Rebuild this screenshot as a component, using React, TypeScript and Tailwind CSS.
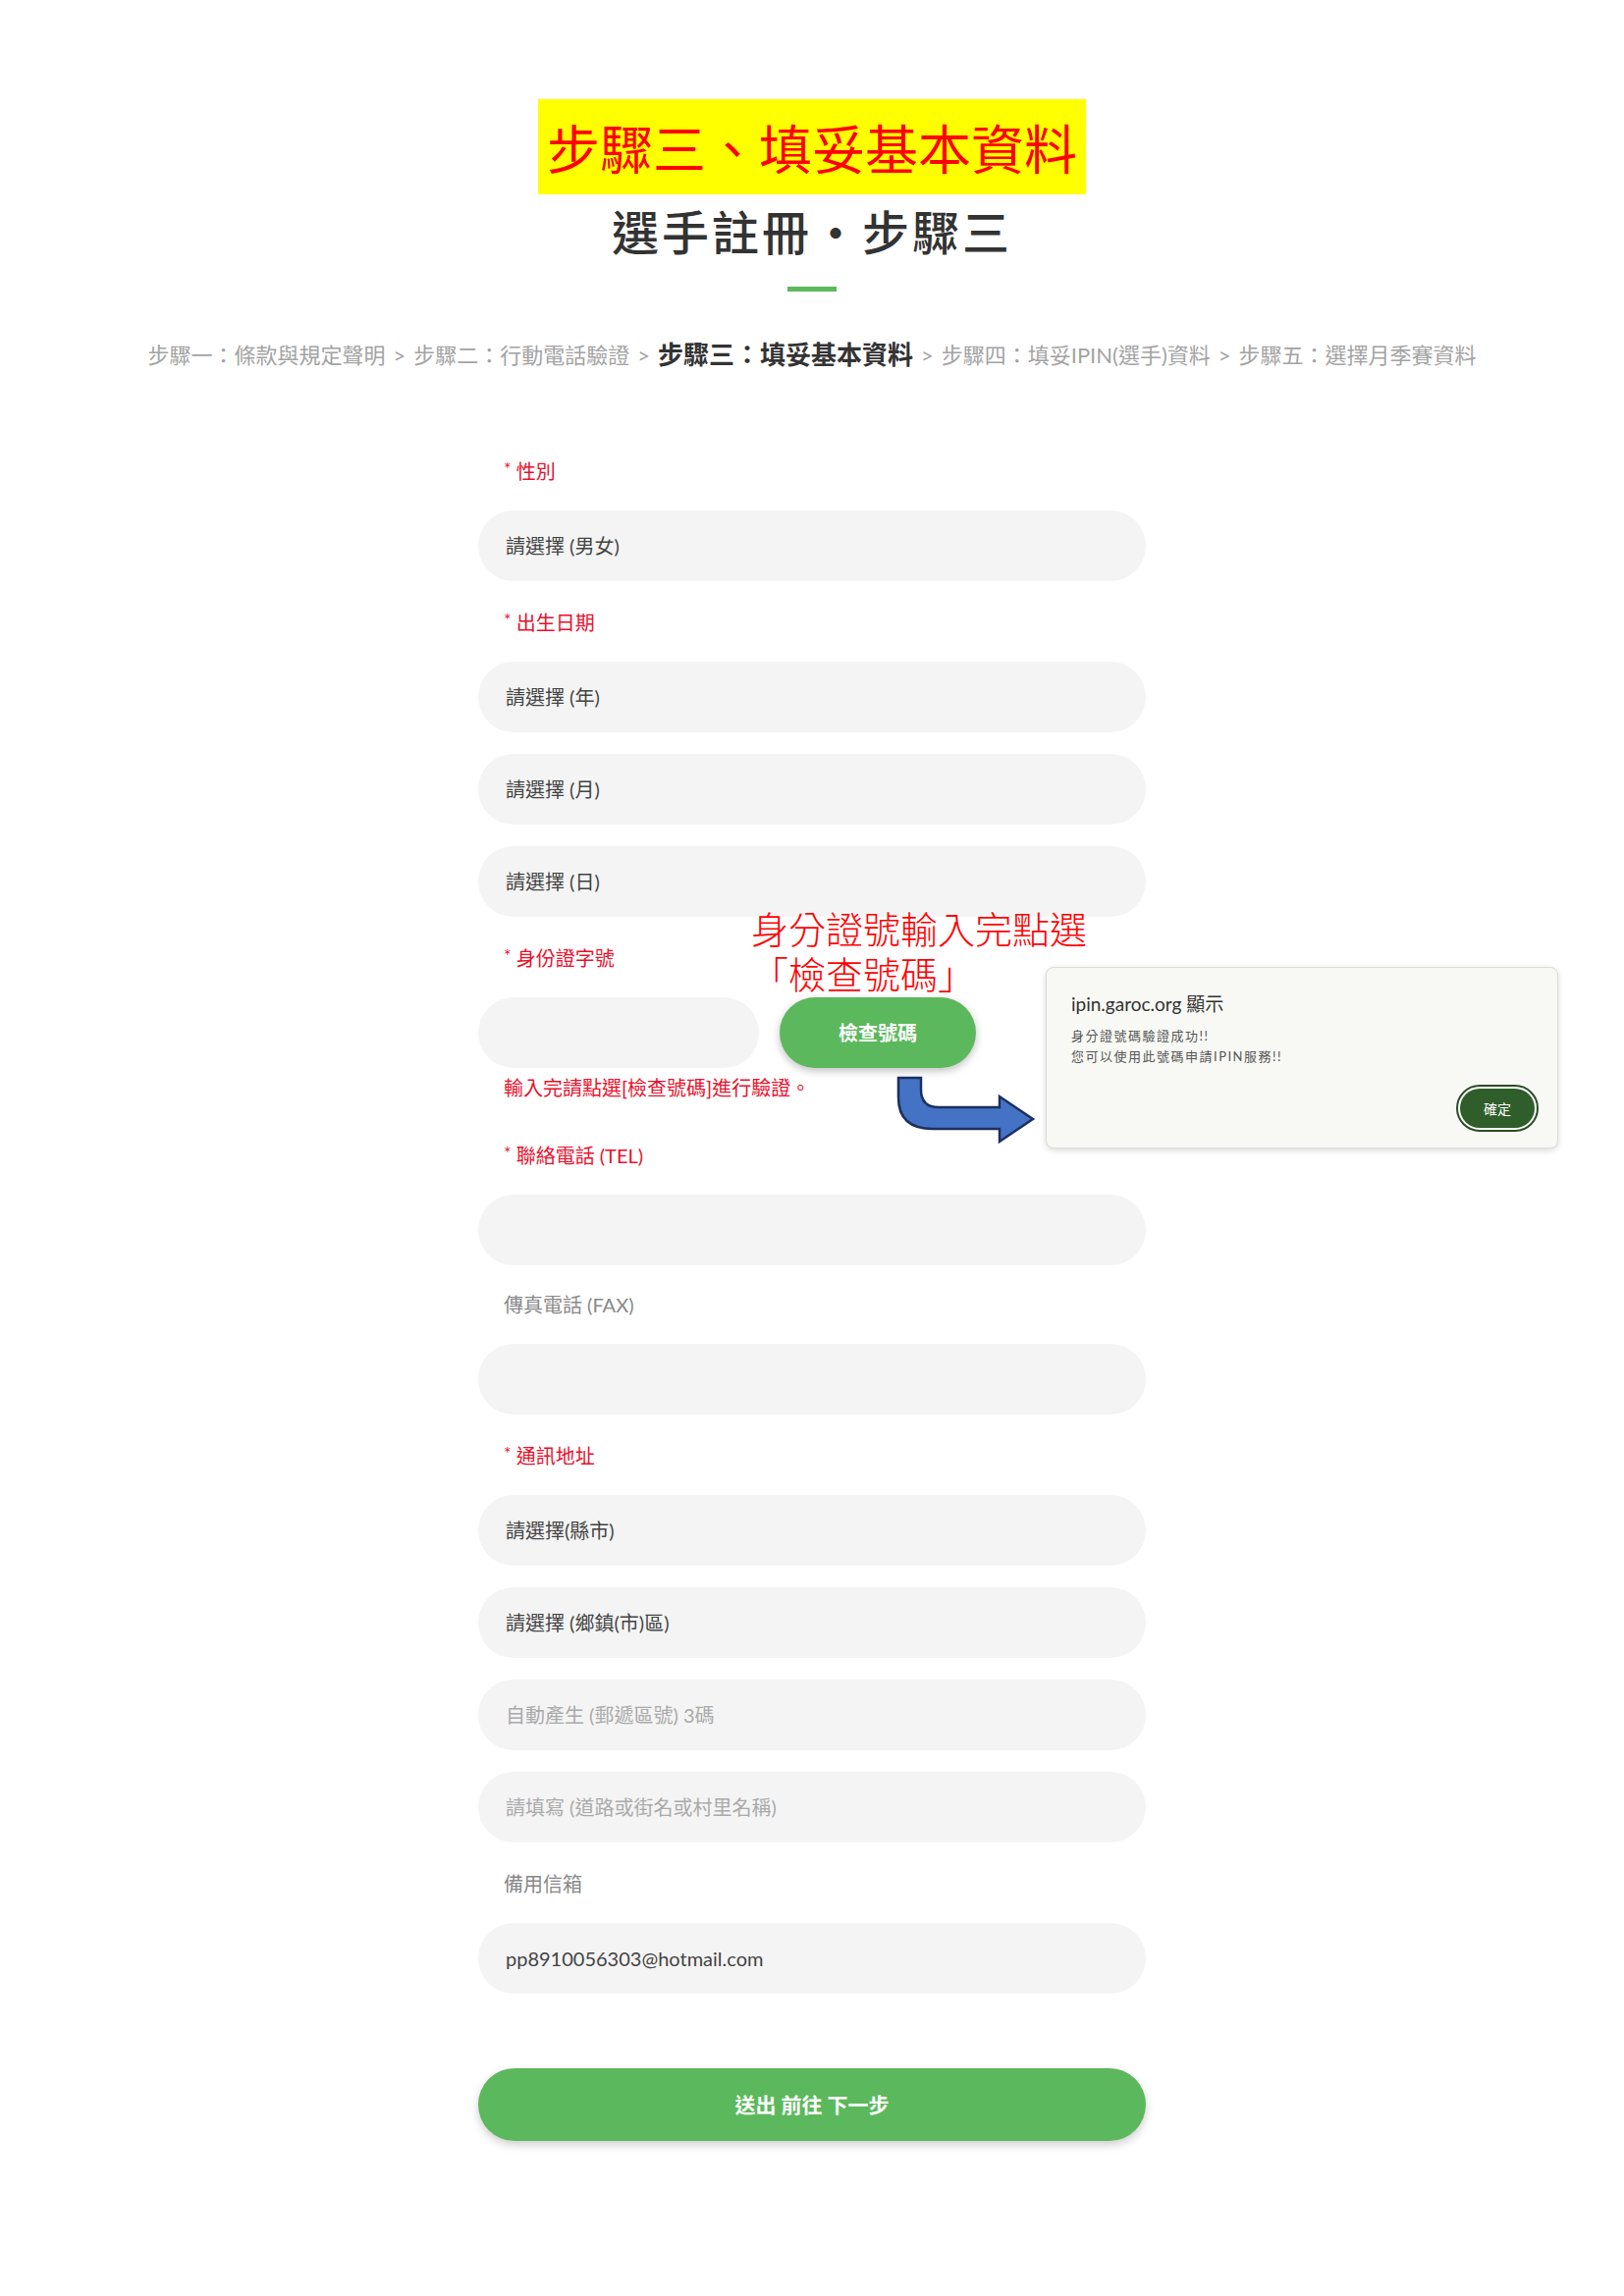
import React from "react";

const FONT = "font-['Lato','Noto_Sans_CJK_TC',sans-serif]";

interface FieldProps {
  label: string;
  required?: boolean;
  children: React.ReactNode;
  className?: string;
}

const Field: React.FC<FieldProps> = ({ label, required, children, className }) => {
  return (
    <div className={`flex flex-col ${className ?? ""}`}>
      <div
        className={`h-[24px] pl-[26px] text-[20px] leading-[24px] mb-[28px] flex items-center ${
          required ? "text-[#e8112d]" : "text-[#888]"
        }`}
      >
        {required && <span className="text-[18px] leading-none mr-[5px] -mt-[6px]">*</span>}
        {label}
      </div>
      <div className="flex flex-col gap-[22px]">{children}</div>
    </div>
  );
};

const Box: React.FC<{ text?: string; muted?: boolean }> = ({ text, muted }) => (
  <div
    className={`h-[72px] rounded-full bg-[#f4f4f4] pl-[28px] flex items-center text-[20px] ${
      muted ? "text-[#aaa]" : "text-[#444]"
    }`}
  >
    {text}
  </div>
);

const steps = [
  { text: "步驟一：條款與規定聲明" },
  { text: "步驟二：行動電話驗證" },
  { text: "步驟三：填妥基本資料", active: true },
  { text: "步驟四：填妥IPIN(選手)資料" },
  { text: "步驟五：選擇月季賽資料" },
];

const App: React.FC = () => {
  return (
    <div className={`relative w-[1654px] min-h-[2339px] bg-white ${FONT}`}>
      {/* header */}
      <div className="flex flex-col items-center pt-[101px]">
        <div className="h-[97px] px-[9px] bg-[#ffff00] flex items-center text-[54px] leading-none text-[#ff0000] font-normal font-['Noto_Sans_CJK_TC',sans-serif]">
          步驟三、填妥基本資料
        </div>
        <h1 className="mt-[12px] text-[48px] leading-[48px] tracking-[3px] text-[#333] font-medium font-['Noto_Sans_CJK_TC',sans-serif]">
          選手註冊・步驟三
        </h1>
        <div className="mt-[34px] w-[50px] h-[5px] bg-[#5cb85c]" />
        <div className="mt-[49px] h-[30px] flex items-center text-[22px] text-[#a3a3a3] whitespace-nowrap">
          {steps.map((s, i) => (
            <React.Fragment key={i}>
              {i > 0 && <span className="mx-[8px]">&gt;</span>}
              <span className={s.active ? "text-[26px] font-bold text-[#333]" : ""}>{s.text}</span>
            </React.Fragment>
          ))}
        </div>
      </div>

      {/* form */}
      <div className="w-[680px] mx-auto mt-[92px] flex flex-col">
        <Field label="性別" required>
          <Box text="請選擇 (男女)" />
        </Field>
        <Field label="出生日期" required className="mt-[30px]">
          <Box text="請選擇 (年)" />
          <Box text="請選擇 (月)" />
          <Box text="請選擇 (日)" />
        </Field>
        <Field label="身份證字號" required className="mt-[30px]">
          <div className="flex items-center gap-[21px]">
            <div className="w-[286px] h-[72px] rounded-full bg-[#f4f4f4]" />
            <button className="w-[200px] h-[72px] rounded-full bg-[#5cb85c] text-white text-[20px] font-bold shadow-[0_3px_8px_rgba(0,0,0,0.25)]">
              檢查號碼
            </button>
          </div>
        </Field>
        <div className="mt-[8px] pl-[26px] text-[20px] leading-[24px] text-[#e8112d]">
          輸入完請點選[檢查號碼]進行驗證。
        </div>
        <Field label="聯絡電話 (TEL)" required className="mt-[45px]">
          <Box />
        </Field>
        <Field label="傳真電話 (FAX)" className="mt-[28px]">
          <Box />
        </Field>
        <Field label="通訊地址" required className="mt-[30px]">
          <Box text="請選擇(縣市)" />
          <Box text="請選擇 (鄉鎮(市)區)" />
          <Box text="自動產生 (郵遞區號) 3碼" muted />
          <Box text="請填寫 (道路或街名或村里名稱)" muted />
        </Field>
        <Field label="備用信箱" className="mt-[30px]">
          <Box text="pp8910056303@hotmail.com" />
        </Field>
        <button className="mt-[76px] h-[74px] rounded-full bg-[#5cb85c] text-white text-[21px] font-bold shadow-[0_4px_10px_rgba(0,0,0,0.2)]">
          送出 前往 下一步
        </button>
      </div>

      {/* annotation */}
      <div className="absolute left-[765px] top-[922px] text-[38px] leading-[46px] text-[#ff0000] font-['Noto_Sans_CJK_TC',sans-serif] font-light whitespace-nowrap">
        <div>身分證號輸入完點選</div>
        <div>「檢查號碼」</div>
      </div>

      <svg
        className="absolute left-[900px] top-[1080px]"
        width="180"
        height="100"
        viewBox="0 0 180 100"
      >
        <path
          d="M15 18 H38 V30 Q38 48 56 48 H118 V37 L152 60 L118 83 V70 H50 Q15 70 15 38 Z"
          fill="#4472c4"
          stroke="#1c2f5e"
          strokeWidth="2.5"
          strokeLinejoin="miter"
        />
      </svg>

      {/* alert dialog */}
      <div className="absolute left-[1065px] top-[985px] w-[522px] h-[185px] rounded-[8px] bg-[#f8f9f4] border border-[#dcdcd6] shadow-[0_2px_6px_rgba(0,0,0,0.15)] pl-[25px] pt-[25px] flex flex-col">
        <div className="text-[19px] leading-[24px] text-[#333]">ipin.garoc.org 顯示</div>
        <div className="mt-[10px] text-[13px] leading-[21px] tracking-[1.5px] text-[#555]">
          <div>身分證號碼驗證成功!!</div>
          <div>您可以使用此號碼申請IPIN服務!!</div>
        </div>
        <div className="absolute right-[19px] bottom-[16px] w-[84px] h-[48px] rounded-full border-2 border-[#2b4d27] p-[2px] bg-white">
          <div className="w-full h-full rounded-full bg-[#2f5e2a] flex items-center justify-center text-white text-[14px]">
            確定
          </div>
        </div>
      </div>
    </div>
  );
};

export default App;
